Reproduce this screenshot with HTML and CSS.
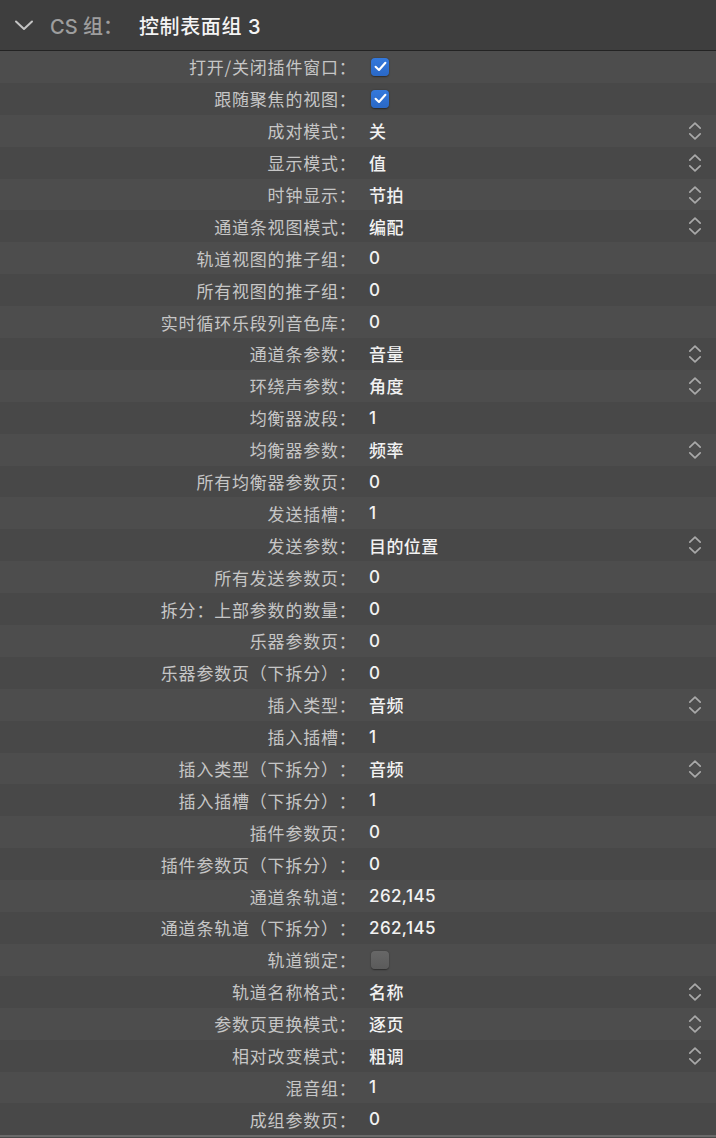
FILE: index.html
```html
<!DOCTYPE html>
<html lang="zh-CN">
<head>
<meta charset="utf-8">
<title>CS 组</title>
<link rel="stylesheet" href="styles.css">
</head>
<body>
<div class="inspector">
  <header class="group-header">
    <svg class="disclosure" width="20" height="12" viewBox="0 0 20 12"><path d="M2 2.5 L10 10 L18 2.5" fill="none" stroke="#c4c4c4" stroke-width="2" stroke-linecap="round" stroke-linejoin="round"/></svg>
    <span class="group-key">CS 组：</span>
    <span class="group-name">控制表面组 3</span>
  </header>
  <div class="rows">
    <div class="row"><span class="label">打开/关闭插件窗口：</span><span class="value"><span class="check on"><svg width="13" height="11" viewBox="0 0 13 11"><path d="M1.6 5.8 L5 9 L11.4 1.8" fill="none" stroke="#fff" stroke-width="2.1" stroke-linecap="round" stroke-linejoin="round"/></svg></span></span></div>
    <div class="row"><span class="label">跟随聚焦的视图：</span><span class="value"><span class="check on"><svg width="13" height="11" viewBox="0 0 13 11"><path d="M1.6 5.8 L5 9 L11.4 1.8" fill="none" stroke="#fff" stroke-width="2.1" stroke-linecap="round" stroke-linejoin="round"/></svg></span></span></div>
    <div class="row popup"><span class="label">成对模式：</span><span class="value">关</span><svg class="stepper" width="14" height="20" viewBox="0 0 14 20"><path d="M1.8 7.2 L7 2.2 L12.2 7.2 M1.8 12.8 L7 17.8 L12.2 12.8" fill="none" stroke="#a9a9a9" stroke-width="1.7" stroke-linecap="round" stroke-linejoin="round"/></svg></div>
    <div class="row popup"><span class="label">显示模式：</span><span class="value">值</span><svg class="stepper" width="14" height="20" viewBox="0 0 14 20"><path d="M1.8 7.2 L7 2.2 L12.2 7.2 M1.8 12.8 L7 17.8 L12.2 12.8" fill="none" stroke="#a9a9a9" stroke-width="1.7" stroke-linecap="round" stroke-linejoin="round"/></svg></div>
    <div class="row popup"><span class="label">时钟显示：</span><span class="value">节拍</span><svg class="stepper" width="14" height="20" viewBox="0 0 14 20"><path d="M1.8 7.2 L7 2.2 L12.2 7.2 M1.8 12.8 L7 17.8 L12.2 12.8" fill="none" stroke="#a9a9a9" stroke-width="1.7" stroke-linecap="round" stroke-linejoin="round"/></svg></div>
    <div class="row popup"><span class="label">通道条视图模式：</span><span class="value">编配</span><svg class="stepper" width="14" height="20" viewBox="0 0 14 20"><path d="M1.8 7.2 L7 2.2 L12.2 7.2 M1.8 12.8 L7 17.8 L12.2 12.8" fill="none" stroke="#a9a9a9" stroke-width="1.7" stroke-linecap="round" stroke-linejoin="round"/></svg></div>
    <div class="row"><span class="label">轨道视图的推子组：</span><span class="value">0</span></div>
    <div class="row"><span class="label">所有视图的推子组：</span><span class="value">0</span></div>
    <div class="row"><span class="label">实时循环乐段列音色库：</span><span class="value">0</span></div>
    <div class="row popup"><span class="label">通道条参数：</span><span class="value">音量</span><svg class="stepper" width="14" height="20" viewBox="0 0 14 20"><path d="M1.8 7.2 L7 2.2 L12.2 7.2 M1.8 12.8 L7 17.8 L12.2 12.8" fill="none" stroke="#a9a9a9" stroke-width="1.7" stroke-linecap="round" stroke-linejoin="round"/></svg></div>
    <div class="row popup"><span class="label">环绕声参数：</span><span class="value">角度</span><svg class="stepper" width="14" height="20" viewBox="0 0 14 20"><path d="M1.8 7.2 L7 2.2 L12.2 7.2 M1.8 12.8 L7 17.8 L12.2 12.8" fill="none" stroke="#a9a9a9" stroke-width="1.7" stroke-linecap="round" stroke-linejoin="round"/></svg></div>
    <div class="row"><span class="label">均衡器波段：</span><span class="value">1</span></div>
    <div class="row popup"><span class="label">均衡器参数：</span><span class="value">频率</span><svg class="stepper" width="14" height="20" viewBox="0 0 14 20"><path d="M1.8 7.2 L7 2.2 L12.2 7.2 M1.8 12.8 L7 17.8 L12.2 12.8" fill="none" stroke="#a9a9a9" stroke-width="1.7" stroke-linecap="round" stroke-linejoin="round"/></svg></div>
    <div class="row"><span class="label">所有均衡器参数页：</span><span class="value">0</span></div>
    <div class="row"><span class="label">发送插槽：</span><span class="value">1</span></div>
    <div class="row popup"><span class="label">发送参数：</span><span class="value">目的位置</span><svg class="stepper" width="14" height="20" viewBox="0 0 14 20"><path d="M1.8 7.2 L7 2.2 L12.2 7.2 M1.8 12.8 L7 17.8 L12.2 12.8" fill="none" stroke="#a9a9a9" stroke-width="1.7" stroke-linecap="round" stroke-linejoin="round"/></svg></div>
    <div class="row"><span class="label">所有发送参数页：</span><span class="value">0</span></div>
    <div class="row"><span class="label">拆分：上部参数的数量：</span><span class="value">0</span></div>
    <div class="row"><span class="label">乐器参数页：</span><span class="value">0</span></div>
    <div class="row"><span class="label">乐器参数页（下拆分）：</span><span class="value">0</span></div>
    <div class="row popup"><span class="label">插入类型：</span><span class="value">音频</span><svg class="stepper" width="14" height="20" viewBox="0 0 14 20"><path d="M1.8 7.2 L7 2.2 L12.2 7.2 M1.8 12.8 L7 17.8 L12.2 12.8" fill="none" stroke="#a9a9a9" stroke-width="1.7" stroke-linecap="round" stroke-linejoin="round"/></svg></div>
    <div class="row"><span class="label">插入插槽：</span><span class="value">1</span></div>
    <div class="row popup"><span class="label">插入类型（下拆分）：</span><span class="value">音频</span><svg class="stepper" width="14" height="20" viewBox="0 0 14 20"><path d="M1.8 7.2 L7 2.2 L12.2 7.2 M1.8 12.8 L7 17.8 L12.2 12.8" fill="none" stroke="#a9a9a9" stroke-width="1.7" stroke-linecap="round" stroke-linejoin="round"/></svg></div>
    <div class="row"><span class="label">插入插槽（下拆分）：</span><span class="value">1</span></div>
    <div class="row"><span class="label">插件参数页：</span><span class="value">0</span></div>
    <div class="row"><span class="label">插件参数页（下拆分）：</span><span class="value">0</span></div>
    <div class="row"><span class="label">通道条轨道：</span><span class="value">262,145</span></div>
    <div class="row"><span class="label">通道条轨道（下拆分）：</span><span class="value">262,145</span></div>
    <div class="row"><span class="label">轨道锁定：</span><span class="value"><span class="check off"></span></span></div>
    <div class="row popup"><span class="label">轨道名称格式：</span><span class="value">名称</span><svg class="stepper" width="14" height="20" viewBox="0 0 14 20"><path d="M1.8 7.2 L7 2.2 L12.2 7.2 M1.8 12.8 L7 17.8 L12.2 12.8" fill="none" stroke="#a9a9a9" stroke-width="1.7" stroke-linecap="round" stroke-linejoin="round"/></svg></div>
    <div class="row popup"><span class="label">参数页更换模式：</span><span class="value">逐页</span><svg class="stepper" width="14" height="20" viewBox="0 0 14 20"><path d="M1.8 7.2 L7 2.2 L12.2 7.2 M1.8 12.8 L7 17.8 L12.2 12.8" fill="none" stroke="#a9a9a9" stroke-width="1.7" stroke-linecap="round" stroke-linejoin="round"/></svg></div>
    <div class="row popup"><span class="label">相对改变模式：</span><span class="value">粗调</span><svg class="stepper" width="14" height="20" viewBox="0 0 14 20"><path d="M1.8 7.2 L7 2.2 L12.2 7.2 M1.8 12.8 L7 17.8 L12.2 12.8" fill="none" stroke="#a9a9a9" stroke-width="1.7" stroke-linecap="round" stroke-linejoin="round"/></svg></div>
    <div class="row"><span class="label">混音组：</span><span class="value">1</span></div>
    <div class="row"><span class="label">成组参数页：</span><span class="value">0</span></div>
  </div>
</div>
</body>
</html>
```

FILE: styles.css
```css
html, body {
  margin: 0;
  padding: 0;
  background: #4a4a4a;
}

body {
  font-family: Inter, "Noto Sans CJK SC", "Noto Sans", sans-serif;
  -webkit-font-smoothing: antialiased;
  text-spacing-trim: space-all;
}

.inspector {
  width: 716px;
  height: 1138px;
  overflow: hidden;
  background: #4a4a4a;
  display: flex;
  flex-direction: column;
}

/* collapsible group header */
.group-header {
  height: 50px;
  flex: 0 0 auto;
  background: #3e3e3e;
  border-bottom: 1px solid #232323;
  display: flex;
  align-items: center;
  box-sizing: content-box;
}

.disclosure {
  margin-left: 14px;
  margin-top: 0;
}

.group-key {
  margin-left: 16px;
  font-size: 20px;
  font-weight: 500;
  color: #9e9e9e;
  width: 89px;
  white-space: nowrap;
}

.group-name {
  font-size: 20px;
  font-weight: 500;
  color: #f4f4f4;
  letter-spacing: 0.6px;
}

/* property rows */
.rows {
  display: flex;
  flex-direction: column;
  border-bottom: 2px solid #6a6a6a;
}

.row {
  height: 31.9px;
  display: grid;
  grid-template-columns: 356px 1fr auto;
  align-items: center;
  background: #4d4d4d;
}

.row:nth-child(even) {
  background: #484848;
}

.label {
  text-align: right;
  font-family: "Noto Sans CJK SC", sans-serif;
  font-size: 17px;
  color: #c6c6c6;
  white-space: nowrap;
  letter-spacing: 0.8px;
  margin-right: -0.6px;
  text-spacing-trim: space-all;
}

.value {
  padding-left: 13px;
  font-size: 17px;
  font-weight: 500;
  color: #f2f2f2;
  letter-spacing: 0.4px;
  display: flex;
  align-items: center;
}

.stepper {
  grid-column: 3;
  margin-right: 14px;
}

.check {
  width: 18px;
  height: 18px;
  border-radius: 4px;
  box-sizing: border-box;
  display: inline-flex;
  align-items: center;
  justify-content: center;
  margin-left: 2px;
}

.check.on {
  background: linear-gradient(#3479dc, #2a68c6);
  box-shadow: 0 0.5px 1.5px rgba(0, 0, 0, 0.45);
}

.check.off {
  background: linear-gradient(#676767, #5b5b5b);
  box-shadow: 0 0.5px 1.5px rgba(0, 0, 0, 0.45);
}
```
